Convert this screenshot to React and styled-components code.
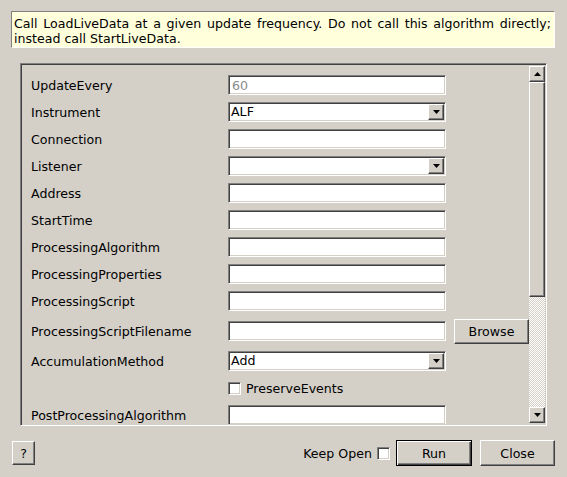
import styled, { createGlobalStyle, css } from "styled-components";

const GlobalStyle = createGlobalStyle`
    html, body {
        margin: 0;
        padding: 0;
        background: #d4d0c8;
    }
    body {
        font-family: "DejaVu Sans", "Liberation Sans", sans-serif;
        font-size: 12.6px;
        color: #000000;
    }
`

// classic 3d edges
const sunken = css`
    border: 1px solid;
    border-color: #808080 #ffffff #ffffff #808080;
    box-shadow: inset 1px 1px 0 #404040, inset -1px -1px 0 #d4d0c8;
`

const raised = css`
    border: 1px solid;
    border-color: #ffffff #404040 #404040 #ffffff;
    box-shadow: inset -1px -1px 0 #808080;
    background: #d4d0c8;
`

const Page = styled.div`
    box-sizing: border-box;
    width: 567px;
    height: 477px;
    padding: 11px 12px 11px 11px;
    display: flex;
    flex-direction: column;
`

const Description = styled.div`
    box-sizing: border-box;
    height: 37px;
    border: 1px solid;
    border-color: #808080 #ffffff #ffffff #808080;
    background: #ffffdc;
    padding: 4px 3px 1px 2px;
    line-height: 15px;
    text-align: justify;
`

const Frame = styled.div`
    box-sizing: border-box;
    margin: 15px 8px 0 9px;
    height: 363px;
    display: flex;
    ${sunken}
    padding: 1px;
`

const Viewport = styled.div`
    flex: 1;
    overflow: hidden;
    padding: 10px 0 0 9px;
`

const Form = styled.div`
    display: grid;
    grid-template-columns: 189px 218px 75px;
    column-gap: 8px;
    row-gap: 7px;
    align-items: center;
`

const Label = styled.div`
    grid-column: 1;
    white-space: nowrap;
`

const Field = styled.div`
    grid-column: 2;
    box-sizing: border-box;
    height: 20px;
    background: #ffffff;
    ${sunken}
    padding: 1px 2px 0 3px;
    line-height: 17px;
    color: ${(p) => (p.$disabled ? "#8a8a8a" : "#000000")};
`

const Combo = styled.div`
    grid-column: 2;
    box-sizing: border-box;
    height: 20px;
    background: #ffffff;
    ${sunken}
    padding: 1px;
    display: flex;
    align-items: center;
`

const ComboText = styled.div`
    flex: 1;
    padding-left: 1px;
    line-height: 16px;
`

const ArrowButton = styled.div`
    box-sizing: border-box;
    width: 16px;
    height: 16px;
    ${raised}
    display: flex;
    align-items: center;
    justify-content: center;
`

const PushButton = styled.div`
    box-sizing: border-box;
    height: ${(p) => p.$h || 25}px;
    width: ${(p) => p.$w}px;
    ${raised}
    display: flex;
    align-items: center;
    justify-content: center;
    ${(p) =>
        p.$default &&
        css`
            border: 1px solid #000000;
            box-shadow: inset 1px 1px 0 #ffffff, inset -1px -1px 0 #404040, inset -2px -2px 0 #808080;
        `}
`

const BrowseButton = styled(PushButton)`
    grid-column: 3;
    margin-top: 1px;
`

const Check = styled.div`
    box-sizing: border-box;
    width: 13px;
    height: 13px;
    background: #ffffff;
    ${sunken}
`

const CheckRow = styled.div`
    grid-column: 2;
    height: 20px;
    display: flex;
    align-items: center;
    gap: 5px;
    padding-top: 1px;
    box-sizing: border-box;
`

const ScrollBar = styled.div`
    width: 16px;
    margin: 1px 0;
    display: flex;
    flex-direction: column;
`

const ScrollButton = styled(ArrowButton)`
    flex: none;
`

const Track = styled.div`
    flex: 1;
    display: flex;
    flex-direction: column;
    background-color: #d4d0c8;
    background-image: repeating-conic-gradient(#ffffff 0 25%, #d4d0c8 0 50%);
    background-size: 2px 2px;
`

const Thumb = styled.div`
    box-sizing: border-box;
    flex: none;
    ${raised}
`

const BottomBar = styled.div`
    margin-top: auto;
    height: 26px;
    display: flex;
    align-items: center;
`

const HelpButton = styled(PushButton)`
    margin-left: 1px;
`

const KeepOpen = styled.div`
    margin-left: auto;
    display: flex;
    align-items: center;
    gap: 5px;
    margin-right: 6px;
`

const Actions = styled.div`
    display: flex;
    gap: 8px;
`

const Arrow = ({ up }) => (
    <svg width="7" height="4" viewBox="0 0 7 4">
        <polygon points={up ? "3.5,0 7,4 0,4" : "0,0 7,0 3.5,4"} fill="#000" />
    </svg>
)

const rows = [
    { label: "UpdateEvery", kind: "field", value: "60", disabled: true },
    { label: "Instrument", kind: "combo", value: "ALF" },
    { label: "Connection", kind: "field" },
    { label: "Listener", kind: "combo" },
    { label: "Address", kind: "field" },
    { label: "StartTime", kind: "field" },
    { label: "ProcessingAlgorithm", kind: "field" },
    { label: "ProcessingProperties", kind: "field" },
    { label: "ProcessingScript", kind: "field" },
    { label: "ProcessingScriptFilename", kind: "field", browse: true },
    { label: "AccumulationMethod", kind: "combo", value: "Add" },
    { label: "", kind: "check", value: "PreserveEvents" },
    { label: "PostProcessingAlgorithm", kind: "field" },
]

const trackHeight = 325
const thumbRatio = 0.66

export const App = () => {
    return (
        <>
            <GlobalStyle />
            <Page>
                <Description>
                    Call LoadLiveData at a given update frequency. Do not call this algorithm directly;
                    instead call StartLiveData.
                </Description>
                <Frame>
                    <Viewport>
                        <Form>
                            {rows.map((r, i) => [
                                <Label key={`l${i}`}>{r.label}</Label>,
                                r.kind === "field" && (
                                    <Field key={`f${i}`} $disabled={r.disabled}>{r.value}</Field>
                                ),
                                r.kind === "combo" && (
                                    <Combo key={`c${i}`}>
                                        <ComboText>{r.value}</ComboText>
                                        <ArrowButton><Arrow /></ArrowButton>
                                    </Combo>
                                ),
                                r.kind === "check" && (
                                    <CheckRow key={`k${i}`}>
                                        <Check />
                                        <span>{r.value}</span>
                                    </CheckRow>
                                ),
                                r.browse && (
                                    <BrowseButton key={`b${i}`} $w={75} $h={25}>Browse</BrowseButton>
                                ),
                            ])}
                        </Form>
                    </Viewport>
                    <ScrollBar>
                        <ScrollButton><Arrow up /></ScrollButton>
                        <Track>
                            <Thumb style={{ height: Math.round(trackHeight * thumbRatio) }} />
                        </Track>
                        <ScrollButton><Arrow /></ScrollButton>
                    </ScrollBar>
                </Frame>
                <BottomBar>
                    <HelpButton $w={23} $h={24}>?</HelpButton>
                    <KeepOpen>
                        <span>Keep Open</span>
                        <Check />
                    </KeepOpen>
                    <Actions>
                        <PushButton $w={76} $h={26} $default>Run</PushButton>
                        <PushButton $w={75} $h={26}>Close</PushButton>
                    </Actions>
                </BottomBar>
            </Page>
        </>
    )
}

export default App;
